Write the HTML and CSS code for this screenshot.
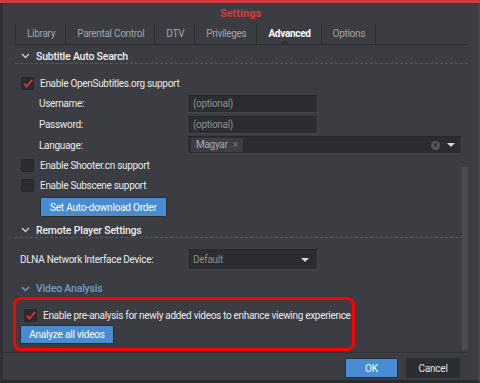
FILE: index.html
```html
<!DOCTYPE html>
<html lang="en">
<head>
    <meta charset="UTF-8">
    <title>Settings</title>
    <link rel="stylesheet" href="styles.css">
</head>
<body>
    <div class="window">
        <div class="topbar"></div>
        <div class="title">Settings</div>

        <div class="tabs">
            <div class="tab">Library</div>
            <div class="tab">Parental Control</div>
            <div class="tab">DTV</div>
            <div class="tab">Privileges</div>
            <div class="tab active">Advanced</div>
            <div class="tab">Options</div>
        </div>

        <div class="content">
            <div class="section-head">
                <svg class="chevron" width="9" height="6" viewBox="0 0 9 6"><path d="M1 1l3.5 3.5L8 1" fill="none" stroke="#c9cacc" stroke-width="1.4"/></svg>
                <span>Subtitle Auto Search</span>
            </div>

            <div class="check-row first">
                <span class="checkbox checked"><svg width="10" height="9" viewBox="0 0 10 9"><path d="M1 4.5l2.5 3L9 1" fill="none" stroke="#e0323c" stroke-width="1.8"/></svg></span>
                <span>Enable OpenSubtitles.org support</span>
            </div>
            <div class="field-row">
                <span class="field-label">Username:</span>
                <div class="input">(optional)</div>
            </div>
            <div class="field-row">
                <span class="field-label">Password:</span>
                <div class="input">(optional)</div>
            </div>
            <div class="field-row lang">
                <span class="field-label">Language:</span>
                <div class="input wide">
                    <span class="tag">Magyar <span class="tag-x">×</span></span>
                    <span class="clear">×</span>
                    <span class="caret"></span>
                </div>
            </div>
            <div class="check-row">
                <span class="checkbox"></span>
                <span>Enable Shooter.cn support</span>
            </div>
            <div class="check-row">
                <span class="checkbox"></span>
                <span>Enable Subscene support</span>
            </div>
            <div class="button-row">
                <button class="btn btn-primary">Set Auto-download Order</button>
            </div>

            <div class="section-head">
                <svg class="chevron" width="9" height="6" viewBox="0 0 9 6"><path d="M1 1l3.5 3.5L8 1" fill="none" stroke="#c9cacc" stroke-width="1.4"/></svg>
                <span>Remote Player Settings</span>
            </div>
            <div class="field-row dlna">
                <span class="field-label">DLNA Network Interface Device:</span>
                <div class="input select">Default <span class="caret"></span></div>
            </div>

            <div class="section-head plain blue">
                <svg class="chevron" width="9" height="6" viewBox="0 0 9 6"><path d="M1 1l3.5 3.5L8 1" fill="none" stroke="#6e9dcf" stroke-width="1.4"/></svg>
                <span>Video Analysis</span>
            </div>

            <div class="highlight">
                <div class="check-row">
                    <span class="checkbox checked"><svg width="10" height="9" viewBox="0 0 10 9"><path d="M1 4.5l2.5 3L9 1" fill="none" stroke="#e0323c" stroke-width="1.8"/></svg></span>
                    <span>Enable pre-analysis for newly added videos to enhance viewing experience</span>
                </div>
                <button class="btn btn-primary analyze">Analyze all videos</button>
            </div>

            <div class="scrollbar"></div>
        </div>

        <div class="footer">
            <button class="btn btn-primary ok">OK</button>
            <button class="btn btn-dark">Cancel</button>
        </div>
    </div>
</body>
</html>
```

FILE: styles.css
```css
body {
    margin: 0;
    width: 480px;
    height: 383px;
    overflow: hidden;
    background-color: #3b3d42;
    font-family: Roboto, "Liberation Sans", Arial, sans-serif;
    font-size: 10px;
    letter-spacing: -0.3px;
    color: #e8e9ea;
}
.window {
    position: relative;
    height: 380px;
    border-left: 3px solid #2f3135;
    border-right: 2px solid #45474c;
    border-bottom: 3px solid #2a2b2e;
}
.topbar {
    height: 3px;
    background: #cf3a3e;
    margin-left: -3px;
    margin-right: -2px;
}
.title {
    height: 21px;
    line-height: 22px;
    text-align: center;
    color: #d83a3a;
    font-weight: bold;
    font-size: 11px;
    letter-spacing: 0;
}
.tabs {
    position: relative;
    display: flex;
    height: 20px;
    margin: 0 10px 0 12px;
    border-bottom: 1px solid #2c2e32;
}
.tabs::after {
    content: "";
    position: absolute;
    left: 266px;
    bottom: 0;
    border: 4px solid transparent;
    border-bottom-color: #2c2e32;
}
.tab {
    padding: 0 10px 0 11px;
    line-height: 20px;
    color: #a3a4a7;
    border-left: 1px solid #2e3034;
}
.tab:last-child {
    border-right: 1px solid #2e3034;
}
.tab.active {
    color: #ffffff;
    font-weight: bold;
}
.content {
    position: relative;
    height: 307px;
    margin-right: 10px;
    border-bottom: 1px solid #303236;
}
.section-head {
    display: flex;
    align-items: center;
    box-sizing: border-box;
    height: 19px;
    padding: 4px 0 0 6px;
    margin-left: 12px;
    font-size: 10.5px;
    font-weight: 500;
    letter-spacing: -0.2px;
    color: #eeeeef;
    border-bottom: 1px dashed #55575c;
}
.section-head.plain {
    border-bottom: none;
    margin-top: 7px;
}
.section-head.blue {
    color: #6e9dcf;
}
.chevron {
    margin-right: 6px;
}
.check-row {
    display: flex;
    align-items: center;
    height: 20px;
    padding-left: 18px;
}
.check-row.first {
    margin-top: 9px;
}
.checkbox {
    display: inline-flex;
    align-items: center;
    justify-content: center;
    width: 11px;
    height: 11px;
    margin-right: 6px;
    background: #2a2c30;
    border: 1px solid #25272a;
    border-radius: 2px;
}
.field-row {
    display: flex;
    align-items: center;
    height: 21px;
    padding-left: 36px;
}
.field-row.lang {
    height: 20px;
}
.field-label {
    width: 148px;
}
.input {
    display: flex;
    align-items: center;
    box-sizing: border-box;
    width: 131px;
    height: 18px;
    padding: 0 5px;
    background: #2b2d31;
    border: 1px solid #45474c;
    border-top-color: #26282b;
    color: #8d8f92;
}
.input.wide {
    width: 275px;
    padding: 0 3px;
}
.tag {
    display: inline-block;
    height: 14px;
    line-height: 14px;
    padding: 0 5px;
    background: #3d3f44;
    color: #a9aaad;
}
.tag-x {
    margin-left: 3px;
    color: #777a7e;
}
.clear {
    margin-left: auto;
    display: inline-flex;
    align-items: center;
    justify-content: center;
    width: 9px;
    height: 9px;
    border-radius: 50%;
    background: #55585c;
    color: #2b2d31;
    font-size: 9px;
    line-height: 9px;
    font-weight: bold;
    letter-spacing: 0;
}
.caret {
    margin-left: 7px;
    margin-right: 3px;
    border: 4px solid transparent;
    border-top: 4px solid #d6d7d8;
    border-bottom: none;
    width: 0;
    height: 0;
}
.input.select {
    height: 21px;
    color: #8b8d90;
}
.input.select .caret {
    margin-left: auto;
}
.field-row.dlna {
    padding-left: 17px;
    margin-top: 11px;
}
.field-row.dlna .field-label {
    width: 167px;
}
.button-row {
    padding: 2px 0 2px 37px;
}
.btn {
    font-family: Roboto, "Liberation Sans", Arial, sans-serif;
    font-size: 10px;
    letter-spacing: -0.2px;
    border: 1px solid #2c2e32;
    border-radius: 1px;
    cursor: pointer;
}
.btn-primary {
    background-color: #4a8cd2;
    color: #ffffff;
    height: 20px;
    padding: 0 9px;
}
.btn-dark {
    background-color: #2b2d30;
    color: #e4e5e6;
    height: 20px;
    width: 54px;
}
.highlight {
    box-sizing: border-box;
    width: 342px;
    height: 54px;
    margin: 1px 0 0 10px;
    padding-left: 4px;
    border: 3px solid #ff0000;
    border-radius: 8px;
}
.highlight .check-row {
    padding-left: 4px;
    margin-top: 5px;
}
.analyze {
    height: 19px;
    width: 94px;
    padding: 0;
    margin-top: 0;
}
.scrollbar {
    position: absolute;
    right: 0;
    top: 122px;
    width: 6px;
    height: 183px;
    background: #4b4d52;
}
.footer {
    display: flex;
    justify-content: flex-end;
    gap: 8px;
    padding: 5px 18px 0 0;
}
.ok {
    width: 53px;
}
```
